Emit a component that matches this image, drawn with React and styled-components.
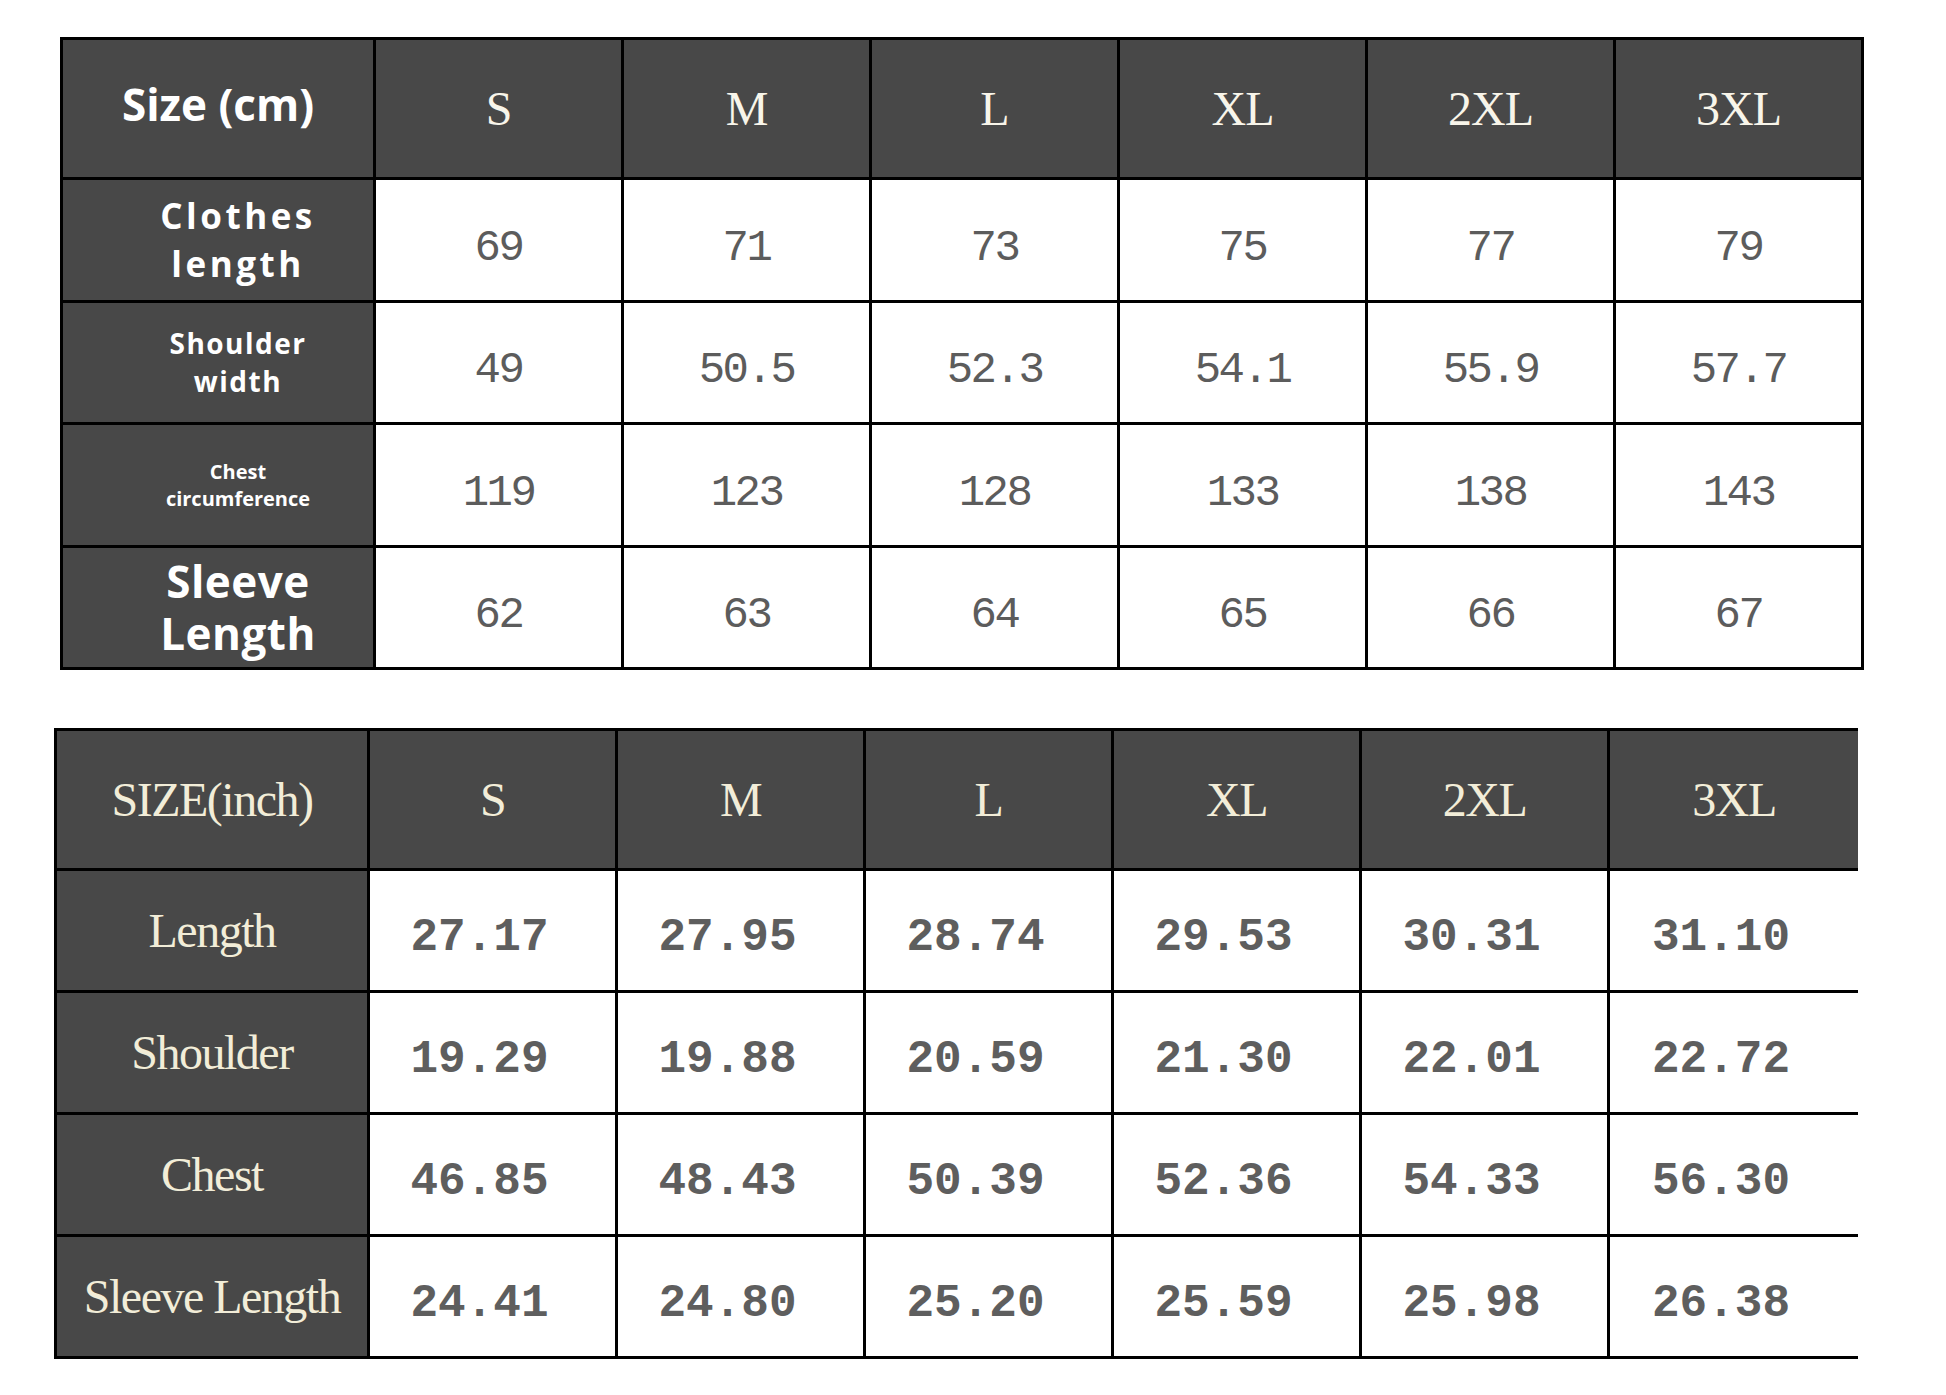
import styled, { createGlobalStyle } from 'styled-components'

const GlobalStyle = createGlobalStyle`
  html, body {
    margin: 0;
    padding: 0;
    background: #fff;
  }
`

const Page = styled.div`
  display: flex;
  flex-direction: column;
  gap: 58px;
  padding-top: 37px;
  width: 1946px;
  height: 1395px;
  box-sizing: border-box;
`

const Chart = styled.div`
  display: grid;
  grid-template-columns: 313px repeat(6, 248px);
  grid-template-rows: 140px repeat(4, ${({ $row }) => $row}px);
  margin-left: ${({ $left }) => $left}px;
  width: max-content;
  border-top: 3px solid #000;
  border-left: 3px solid #000;
`

const Cell = styled.div`
  display: flex;
  align-items: center;
  justify-content: center;
  box-sizing: border-box;
  border-bottom: 3px solid #000;
  border-right: ${({ $open }) => ($open ? 'none' : '3px solid #000')};
  text-align: center;
`

const Dark = styled(Cell)`
  background: #484848;
`

// metric table: bold sans labels
const CmCorner = styled(Dark)`
  padding-bottom: 10px;
  font-family: 'Open Sans', 'DejaVu Sans', sans-serif;
  font-weight: 700;
  font-size: 44px;
  color: #fff;
`

const CmLabel = styled(Dark)`
  padding-left: 40px;
  font-family: 'Open Sans', 'DejaVu Sans', sans-serif;
  font-weight: 700;
  color: #fff;
  font-size: ${({ $size }) => $size}px;
  line-height: ${({ $lh }) => $lh}px;
  letter-spacing: ${({ $ls }) => $ls}px;
`

const SizeHead = styled(Dark)`
  font-family: 'Liberation Serif', 'Times New Roman', serif;
  font-size: 48px;
  letter-spacing: ${({ $ls }) => $ls}px;
  color: ${({ $tone }) => $tone};
`

const InchLabel = styled(Dark)`
  font-family: 'Liberation Serif', 'Times New Roman', serif;
  font-size: 48px;
  letter-spacing: -1.5px;
  color: #f2edd8;
  white-space: nowrap;
`

const CmValue = styled(Cell)`
  background: #fff;
  padding-top: 16px;
  font-family: 'Liberation Mono', 'Courier New', monospace;
  font-size: 44px;
  letter-spacing: -2.5px;
  color: #5c5c5c;
`

const InchValue = styled(Cell)`
  background: #fff;
  padding-right: 26px;
  padding-top: 14px;
  font-family: 'Liberation Mono', 'Courier New', monospace;
  font-weight: 700;
  font-size: 46px;
  color: #5e5e5e;
`

const sizes = ['S', 'M', 'L', 'XL', '2XL', '3XL']

const cmRows = [
  { label: ['Clothes', 'length'], size: 35, lh: 48, ls: 3.5, values: ['69', '71', '73', '75', '77', '79'] },
  { label: ['Shoulder', 'width'], size: 28, lh: 38, ls: 1.5, values: ['49', '50.5', '52.3', '54.1', '55.9', '57.7'] },
  { label: ['Chest', 'circumference'], size: 20, lh: 27, ls: 0, values: ['119', '123', '128', '133', '138', '143'] },
  { label: ['Sleeve', 'Length'], size: 44, lh: 52, ls: 0.5, values: ['62', '63', '64', '65', '66', '67'] },
]

const inchRows = [
  { label: 'Length', values: ['27.17', '27.95', '28.74', '29.53', '30.31', '31.10'] },
  { label: 'Shoulder', values: ['19.29', '19.88', '20.59', '21.30', '22.01', '22.72'] },
  { label: 'Chest', values: ['46.85', '48.43', '50.39', '52.36', '54.33', '56.30'] },
  { label: 'Sleeve Length', values: ['24.41', '24.80', '25.20', '25.59', '25.98', '26.38'] },
]

function CmChart() {
  return (
    <Chart $left={60} $row={122.5}>
      <CmCorner>Size (cm)</CmCorner>
      {sizes.map((s) => (
        <SizeHead key={s} $ls={-1} $tone="#f8f5ea">
          {s}
        </SizeHead>
      ))}
      {cmRows.map((row) => [
        <CmLabel key={row.label[0]} $size={row.size} $lh={row.lh} $ls={row.ls}>
          <div>
            {row.label[0]}
            <br />
            {row.label[1]}
          </div>
        </CmLabel>,
        ...row.values.map((v, i) => <CmValue key={row.label[0] + i}>{v}</CmValue>),
      ])}
    </Chart>
  )
}

function InchChart() {
  return (
    <Chart $left={54} $row={122}>
      <InchLabel>SIZE(inch)</InchLabel>
      {sizes.map((s, i) => (
        <SizeHead key={s} $ls={-1.5} $tone="#f2edd8" $open={i === sizes.length - 1}>
          {s}
        </SizeHead>
      ))}
      {inchRows.map((row) => [
        <InchLabel key={row.label}>{row.label}</InchLabel>,
        ...row.values.map((v, i) => (
          <InchValue key={row.label + i} $open={i === row.values.length - 1}>
            {v}
          </InchValue>
        )),
      ])}
    </Chart>
  )
}

export default function App() {
  return (
    <>
      <GlobalStyle />
      <Page>
        <CmChart />
        <InchChart />
      </Page>
    </>
  )
}
